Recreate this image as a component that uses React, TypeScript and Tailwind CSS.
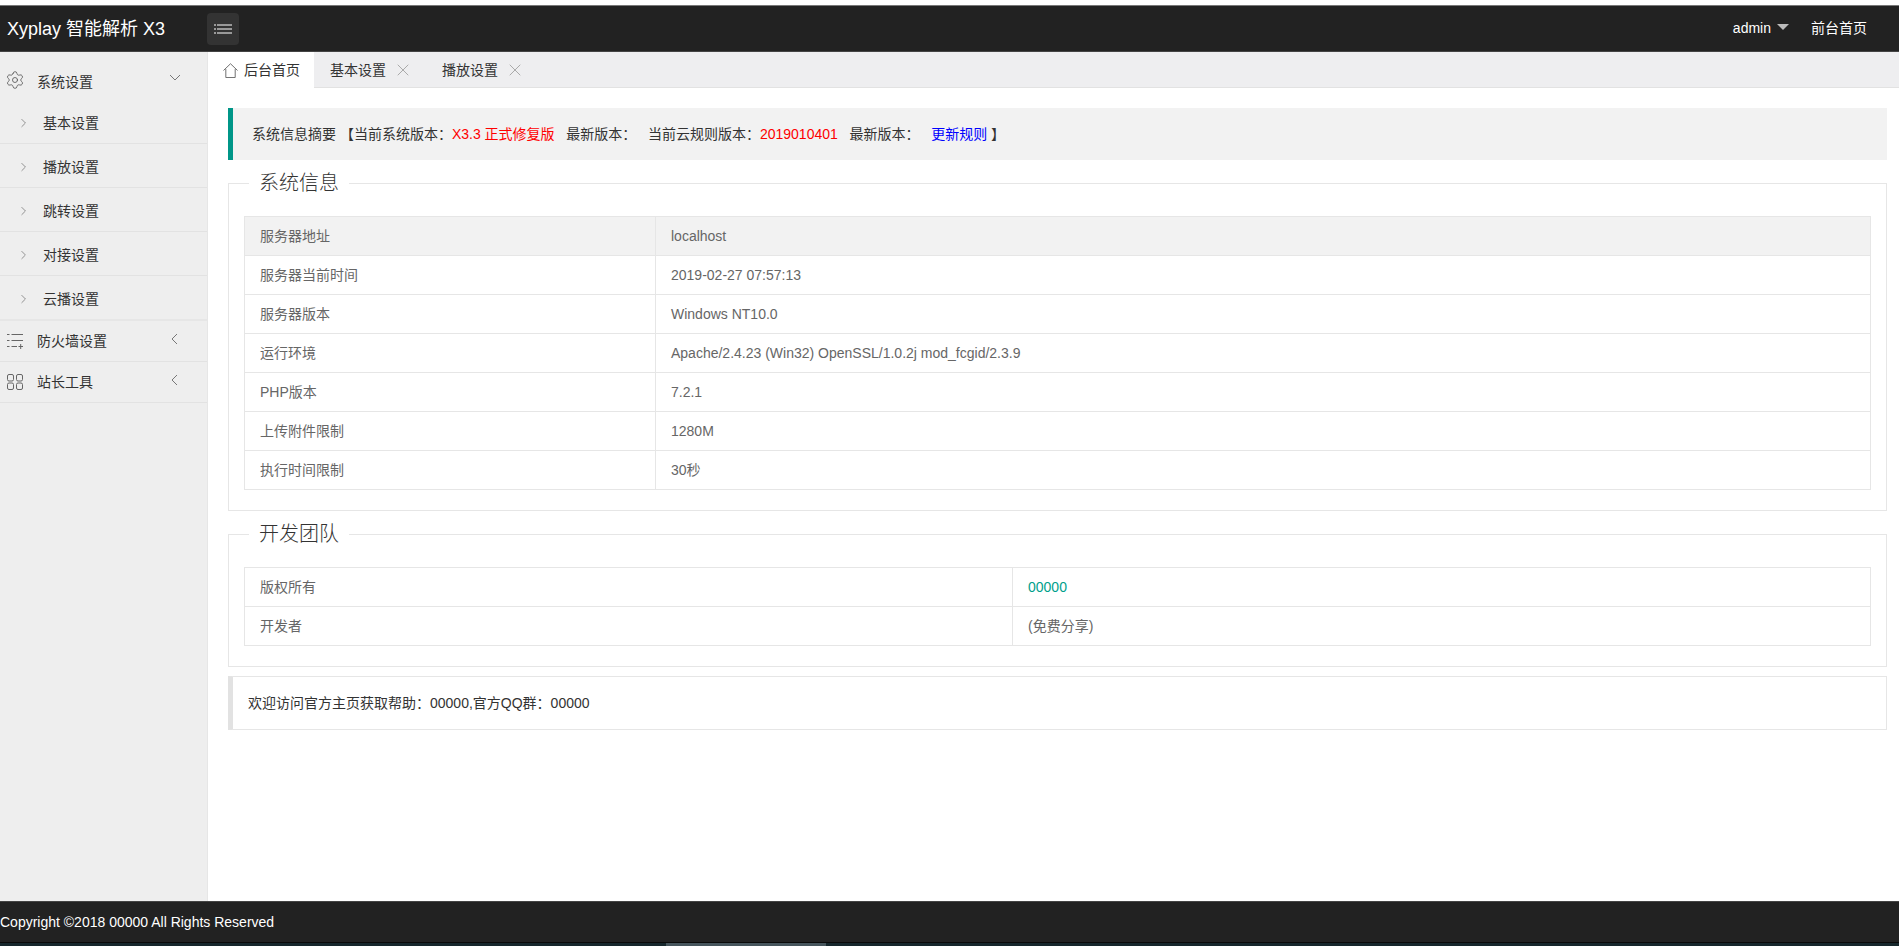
import React from "react";
import { Settings, X } from "lucide-react";

const Chevron = ({ dir, className }: { dir: "right" | "down" | "left"; className: string }) => {
  const d = dir === "right" ? "M2 1 L7 6 L2 11" : dir === "left" ? "M7 1 L2 6 L7 11" : "M1 3 L6 8 L11 3";
  return (
    <svg viewBox={dir === "down" ? "0 0 12 10" : "0 0 9 12"} fill="none" stroke="#777" strokeWidth="1" className={className}>
      <path d={d} />
    </svg>
  );
};

const ListPlusIcon = () => (
  <svg viewBox="0 0 16 16" fill="none" stroke="#666" strokeWidth="1" className="w-4 h-4 shrink-0">
    <path d="M0 1.5h2.5M4.5 1.5H16M0 7.5h2.5M4.5 7.5H16M0 13.5h2.5M4.5 13.5H10M11.5 13.5H16M13.7 11v5" />
  </svg>
);

const GridIcon = () => (
  <svg viewBox="0 0 16 16" fill="none" stroke="#666" strokeWidth="1" className="w-4 h-4 shrink-0">
    <rect x="0.5" y="0.5" width="6" height="6.5" rx="1.5" />
    <rect x="9.5" y="0.5" width="6" height="6.5" rx="1.5" />
    <rect x="0.5" y="9" width="6" height="6.5" rx="1.5" />
    <rect x="9.5" y="9" width="6" height="6.5" rx="1.5" />
  </svg>
);

const HomeIcon = () => (
  <svg viewBox="0 0 16 16" fill="none" stroke="#666" strokeWidth="1" className="w-[15px] h-[15px] shrink-0">
    <path d="M0.5 8 L8 0.8 L15.5 8 M3 6.5 V15.5 H13 V6.5" />
  </svg>
);

const MenuIcon = () => (
  <svg viewBox="0 0 18 10" fill="none" stroke="#fff" strokeWidth="1" className="w-[18px] h-[10px]">
    <path d="M0 1h2M3 1h15M0 5h2M3 5h15M0 9h2M3 9h15" />
  </svg>
);

const subItems = ["基本设置", "播放设置", "跳转设置", "对接设置", "云播设置"];

const Sidebar = () => (
  <aside className="w-[208px] shrink-0 bg-[#eeeeee] border-r border-[#e6e6e6] pt-[10px] text-[14px] leading-[20px] text-[#333]">
    <div className="h-[38px] flex items-start pt-[10px] pl-[7px]">
      <Settings size={20} strokeWidth={1} color="#555" className="shrink-0 -mt-[2px] -ml-[2px]" />
      <span className="ml-[12px]">系统设置</span>
      <Chevron dir="down" className="w-3 h-[10px] ml-[76px] mt-0" />
    </div>
    {subItems.map((t, i) => (
      <div
        key={t}
        className={
          i === 4
            ? "h-[45px] flex items-center pl-5 pt-[2px] border-b-2 border-[#e6e6e6]"
            : "h-[44px] flex items-center pl-5 pt-[2px] border-b border-[#e2e2e2]"
        }
      >
        <Chevron dir="right" className="w-[7px] h-[10px] shrink-0" />
        <span className="ml-4">{t}</span>
      </div>
    ))}
    <div className="h-[41px] flex items-center pl-[7px] border-b border-[#e2e2e2]">
      <ListPlusIcon />
      <span className="ml-[14px]">防火墙设置</span>
      <Chevron dir="left" className="w-[9px] h-3 ml-[63px] -mt-[5px]" />
    </div>
    <div className="h-[41px] flex items-center pl-[7px] border-b border-[#e2e2e2]">
      <GridIcon />
      <span className="ml-[14px]">站长工具</span>
      <Chevron dir="left" className="w-[9px] h-3 ml-[77px] -mt-[5px]" />
    </div>
  </aside>
);

const Tabs = () => (
  <div className="h-[36px] flex bg-[#eeeef0] border-b border-[#e2e2e2] text-[14px] text-[#333] leading-[20px]">
    <div className="w-[106px] h-[36px] bg-white flex items-center pl-[15px] gap-[6px] -mb-px">
      <HomeIcon />
      <span>后台首页</span>
    </div>
    {["基本设置", "播放设置"].map((t) => (
      <div key={t} className="w-[112px] flex items-center pl-4">
        <span>{t}</span>
        <X size={20} strokeWidth={1.2} color="#aaa" className="ml-[7px]" />
      </div>
    ))}
  </div>
);

const Table = ({ rows, col, firstShaded }: { rows: [string, React.ReactNode][]; col: string; firstShaded?: boolean }) => (
  <table className="w-full table-fixed border-collapse text-[14px] leading-[20px] text-[#666]">
    <colgroup>
      <col className={col} />
      <col />
    </colgroup>
    <tbody>
      {rows.map(([k, v], i) => (
        <tr key={k} className={firstShaded && i === 0 ? "bg-[#f2f2f2]" : ""}>
          <td className="border border-[#e6e6e6] px-[15px] py-[9px]">{k}</td>
          <td className="border border-[#e6e6e6] px-[15px] py-[9px]">{v}</td>
        </tr>
      ))}
    </tbody>
  </table>
);

const Field = ({ title, children }: { title: string; children: React.ReactNode }) => (
  <fieldset className="border border-[#e6e6e6] px-[15px] pt-[19px] pb-[20px] mb-[9px]">
    <legend className="ml-[5px] px-[10px] text-[20px] font-light leading-[28px] text-[#333]">{title}</legend>
    {children}
  </fieldset>
);

export default function App() {
  return (
    <div className="h-screen flex flex-col overflow-hidden bg-white [font-family:'Liberation_Sans','Noto_Sans_CJK_SC',sans-serif]">
      <div className="h-[5px] bg-white shrink-0" />
      <header className="h-[47px] shrink-0 bg-[#222] border-t border-[#777] border-b border-b-[#444] flex items-center text-white">
        <div className="w-[207px] pl-[7px] text-[18px] leading-[24px] shrink-0">Xyplay 智能解析 X3</div>
        <button className="w-8 h-8 rounded-sm bg-[#333] flex items-center justify-center">
          <MenuIcon />
        </button>
        <div className="ml-auto flex items-center text-[14px] pr-[32px]">
          <span>admin</span>
          <span className="ml-[6px] mt-[-4px] w-0 h-0 border-x-[6px] border-x-transparent border-t-[6px] border-t-[#bbb]" />
          <span className="ml-[22px]">前台首页</span>
        </div>
      </header>
      <div className="flex-1 flex min-h-0">
        <Sidebar />
        <main className="flex-1 min-w-0">
          <Tabs />
          <div className="pl-5 pr-3 pt-5">
            <div className="h-[52px] flex items-center bg-[#f2f2f2] border-l-[5px] border-[#009688] pl-[19px] text-[14px] text-[#333] mb-[9px] whitespace-pre">
              <span>系统信息摘要 【当前系统版本：</span>
              <span className="text-[#ff0000]">X3.3 正式修复版</span>
              <span>{"\u00a0\u00a0\u00a0"}最新版本：{"\u00a0\u00a0\u00a0"}当前云规则版本：</span>
              <span className="text-[#ff0000]">2019010401</span>
              <span>{"\u00a0\u00a0\u00a0"}最新版本：{"\u00a0\u00a0\u00a0"}</span>
              <span className="text-[#0000ff]">更新规则</span>
              <span> 】</span>
            </div>
            <Field title="系统信息">
              <Table
                firstShaded
                col="w-[411px]"
                rows={[
                  ["服务器地址", "localhost"],
                  ["服务器当前时间", "2019-02-27 07:57:13"],
                  ["服务器版本", "Windows NT10.0"],
                  ["运行环境", "Apache/2.4.23 (Win32) OpenSSL/1.0.2j mod_fcgid/2.3.9"],
                  ["PHP版本", "7.2.1"],
                  ["上传附件限制", "1280M"],
                  ["执行时间限制", "30秒"],
                ]}
              />
            </Field>
            <Field title="开发团队">
              <Table
                col="w-[768px]"
                rows={[
                  ["版权所有", <span className="text-[#009f8c]">00000</span>],
                  ["开发者", "(免费分享)"],
                ]}
              />
            </Field>
            <div className="h-[54px] mt-[2px] flex items-center border border-[#e6e6e6] border-l-[5px] border-l-[#e2e2e2] pl-[15px] text-[14px] text-[#333]">
              欢迎访问官方主页获取帮助：00000,官方QQ群：00000
            </div>
          </div>
        </main>
      </div>
      <footer className="h-[41px] shrink-0 bg-[#222] border-t border-[#444] flex items-center text-white text-[14px]">
        <span>Copyright ©2018 00000 All Rights Reserved</span>
      </footer>
      <div className="h-[4px] shrink-0 flex bg-[#16272c] border-t border-[#0a0a0a]">
        <div className="w-[666px]" />
        <div className="w-[160px] bg-[#46555c]" />
      </div>
    </div>
  );
}
